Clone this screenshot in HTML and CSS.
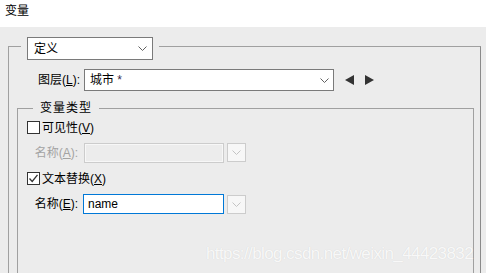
FILE: index.html
```html
<!DOCTYPE html>
<html lang="zh">
<head>
<meta charset="utf-8">
<title>变量</title>
<link rel="stylesheet" href="styles.css">
</head>
<body>
<div class="titlebar">变量</div>
<div class="outer">
  <div class="outer-legend">
    <div class="combo">
      <span class="combo-text">定义</span>
      <svg class="chev" width="9" height="5" viewBox="0 0 9 5"><path d="M0.5 0.5 L4.5 4.5 L8.5 0.5" fill="none" stroke="#606060" stroke-width="1"/></svg>
    </div>
  </div>
  <div class="layer-row">
    <span class="layer-label">图层(<u>L</u>):</span>
    <div class="select">
      <span class="select-text">城市 <span class="star">*</span></span>
      <svg class="chev" width="9" height="5" viewBox="0 0 9 5"><path d="M0.5 0.5 L4.5 4.5 L8.5 0.5" fill="none" stroke="#606060" stroke-width="1"/></svg>
    </div>
    <svg class="arrow first" width="9" height="10" viewBox="0 0 9 10"><polygon points="9,0 9,10 0,5" fill="#333"/></svg>
    <svg class="arrow" width="9" height="10" viewBox="0 0 9 10"><polygon points="0,0 0,10 9,5" fill="#333"/></svg>
  </div>
  <div class="inner">
    <div class="inner-legend">变量类型</div>
    <div class="check-row">
      <span class="checkbox"></span>
      <span class="check-label">可见性(<u>V</u>)</span>
    </div>
    <div class="field-row disabled">
      <span class="field-label">名称(<u>A</u>):</span>
      <span class="input"></span>
      <span class="drop"><svg width="9" height="5" viewBox="0 0 9 5"><path d="M0.5 0.5 L4.5 4.5 L8.5 0.5" fill="none" stroke="#c4c4c4" stroke-width="1"/></svg></span>
    </div>
    <div class="check-row">
      <span class="checkbox"><svg width="11" height="11" viewBox="0 0 11 11"><path d="M1.5 5.5 L4.2 8.5 L9.5 1.8" fill="none" stroke="#333" stroke-width="1.3"/></svg></span>
      <span class="check-label">文本替换(<u>X</u>)</span>
    </div>
    <div class="field-row">
      <span class="field-label">名称(<u>E</u>):</span>
      <span class="input focus">name</span>
      <span class="drop"><svg width="9" height="5" viewBox="0 0 9 5"><path d="M0.5 0.5 L4.5 4.5 L8.5 0.5" fill="none" stroke="#c4c4c4" stroke-width="1"/></svg></span>
    </div>
  </div>
</div>
<div class="watermark">https://blog.csdn.net/weixin_44423832</div>
</body>
</html>
```
FILE: styles.css
```css
html, body {
  margin: 0;
  padding: 0;
}
body {
  width: 486px;
  height: 273px;
  overflow: hidden;
  background: #ececec;
  font-family: "Liberation Sans", "Noto Sans CJK SC", sans-serif;
  font-size: 12px;
  color: #000;
  position: relative;
}
u {
  text-decoration: underline;
  text-underline-offset: 1px;
}
.titlebar {
  height: 27px;
  box-sizing: border-box;
  background: #fff;
  padding: 3px 0 0 5px;
  line-height: 17px;
}
.outer {
  position: relative;
  margin: 19px 5px 0 8px;
  height: 226px;
  border: 1px solid #a0a0a0;
  border-right-color: #8a8a8a;
  border-bottom: none;
  padding: 0 6px 0 8px;
}
.outer-legend {
  position: absolute;
  top: -10px;
  left: 12px;
  padding: 0 6px;
  background: #ececec;
}
.combo {
  width: 126px;
  height: 23px;
  box-sizing: border-box;
  border: 1px solid #7a7a7a;
  background: #fff;
  display: flex;
  align-items: center;
  justify-content: space-between;
  padding: 0 5px 0 6px;
  line-height: 14px;
}
.chev {
  display: block;
}
.layer-row {
  display: flex;
  align-items: center;
  margin: 22px 0 0 -8px;
  height: 22px;
}
.layer-label {
  width: 75px;
  box-sizing: border-box;
  text-align: right;
  padding-right: 4px;
  line-height: 14px;
}
.select {
  width: 250px;
  height: 22px;
  box-sizing: border-box;
  border: 1px solid #7a7a7a;
  background: #fff;
  display: flex;
  align-items: center;
  justify-content: space-between;
  padding: 0 4px 0 5px;
  line-height: 14px;
}
.star {
  color: #3a2a48;
}
.arrow {
  display: block;
  margin-left: 11px;
}
.inner {
  position: relative;
  margin-top: 17px;
  height: 152px;
  border: 1px solid #a0a0a0;
  border-bottom: none;
  padding: 12px 0 0 9px;
}
.inner-legend {
  position: absolute;
  top: -8px;
  left: 15px;
  padding: 0 7px;
  background: #ececec;
  line-height: 14px;
  letter-spacing: 1px;
}
.check-row {
  display: flex;
  align-items: center;
  height: 13px;
}
.checkbox {
  width: 13px;
  height: 13px;
  box-sizing: border-box;
  border: 1px solid #333;
  background: #fff;
  display: flex;
  align-items: center;
  justify-content: center;
}
.checkbox svg {
  display: block;
}
.check-label {
  margin-left: 2px;
  line-height: 14px;
}
.field-row {
  display: flex;
  align-items: center;
  height: 20px;
  margin: 9px 0;
}
.field-label {
  width: 51px;
  text-align: right;
  margin-right: 6px;
  line-height: 14px;
}
.input {
  width: 140px;
  height: 20px;
  box-sizing: border-box;
  border: 1px solid #7a7a7a;
  background: #fff;
  padding: 0 4px;
  line-height: 18px;
  font-size: 12px;
}
.input.focus {
  border-color: #0078d7;
  width: 141px;
  margin-left: -1px;
}
.drop {
  width: 19px;
  height: 19px;
  box-sizing: border-box;
  border: 1px solid #cccccc;
  background: #f7f7f7;
  margin-left: 3px;
  display: flex;
  align-items: center;
  justify-content: center;
}
.drop svg {
  display: block;
}
.disabled .field-label {
  color: #a3a3a3;
}
.disabled .input {
  border-color: #cccccc;
  background: #ececec;
  box-shadow: inset 0 0 0 1px #f7f7f7;
}
.disabled .drop {
  margin-top: -1px;
}
.watermark {
  position: absolute;
  left: 206px;
  top: 245px;
  font-family: "Liberation Sans", sans-serif;
  font-size: 17px;
  line-height: 17px;
  letter-spacing: -0.6px;
  color: rgba(255, 255, 255, 0.85);
  text-shadow: 0 0 1px rgba(0, 0, 0, 0.12);
  white-space: nowrap;
}
```
